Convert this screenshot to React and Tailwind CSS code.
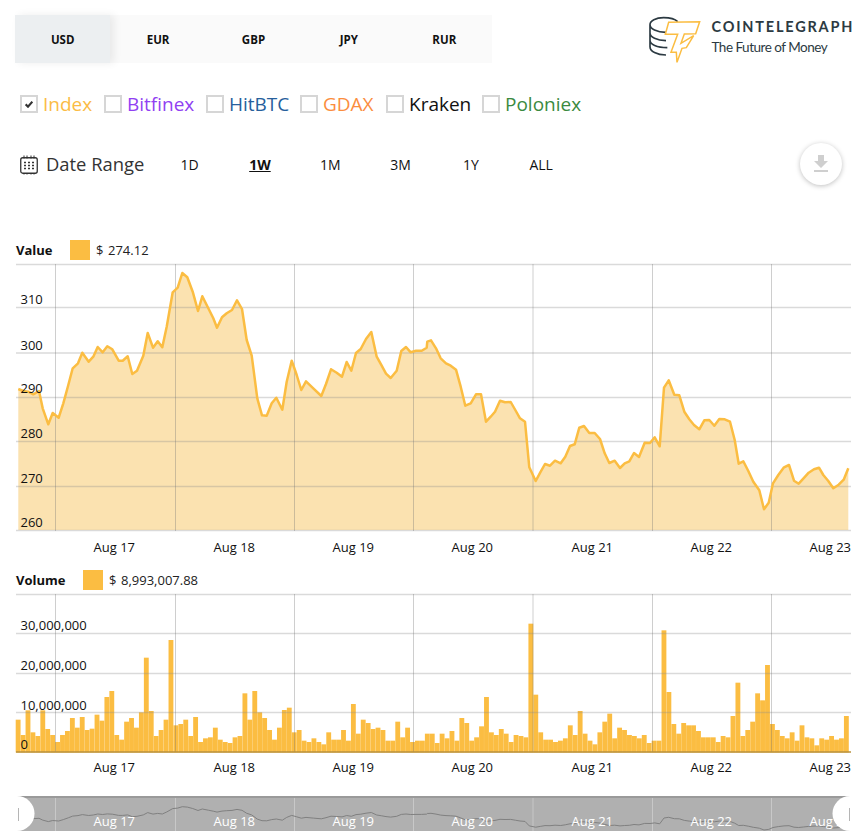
import React from "react";

const currencies = ["USD", "EUR", "GBP", "JPY", "RUR"];
const exchanges = [
  { name: "Index", color: "text-[#fbbc45]", width: "w-[84px]", checked: true },
  { name: "Bitfinex", color: "text-[#9040f2]", width: "w-[102px]" },
  { name: "HitBTC", color: "text-[#26609c]", width: "w-[94px]" },
  { name: "GDAX", color: "text-[#fb8d3e]", width: "w-[86px]" },
  { name: "Kraken", color: "text-[#111111]", width: "w-[96px]" },
  { name: "Poloniex", color: "text-[#3b8a40]", width: "w-[110px]" },
];
const ranges = ["1D", "1W", "1M", "3M", "1Y", "ALL"];

const dayLabels = [
  ["Aug 17", 93.5],
  ["Aug 18", 213.5],
  ["Aug 19", 332.5],
  ["Aug 20", 451.5],
  ["Aug 21", 571.5],
  ["Aug 22", 690.5],
  ["Aug 23", 809.5],
];
const dayLines = [55.5, 175.5, 294.5, 413.5, 533, 652.5, 771.5];

// traced at 3x from the reference, left half then right half
const leftLine = [
  [55, 462], [70, 468], [85, 470], [100, 478], [117, 468], [128, 520], [145, 568], [158, 534], [176, 548], [190, 505],
  [205, 450], [218, 400], [234, 385], [247, 353], [266, 380], [280, 365], [293, 336], [308, 352], [322, 334], [337, 343],
  [356, 377], [368, 377], [383, 364], [397, 417], [411, 407], [430, 362], [443, 294], [459, 338], [473, 319], [487, 337],
  [500, 275], [518, 172], [533, 158], [547, 114], [562, 127], [578, 170], [594, 228], [607, 184], [625, 220], [640, 250],
  [651, 278], [666, 247], [680, 235], [696, 225], [711, 196], [726, 222], [740, 315], [755, 362], [772, 490], [786, 541],
  [800, 542], [815, 505], [829, 488], [847, 524], [860, 440], [875, 377], [890, 420], [904, 465], [918, 439], [940, 460],
  [964, 483], [978, 447], [993, 403], [1010, 413], [1026, 425], [1040, 381], [1054, 407], [1068, 354], [1082, 342], [1098, 312],
  [1114, 291], [1130, 365], [1145, 392], [1158, 416], [1172, 429], [1190, 407], [1204, 348], [1218, 336], [1232, 352], [1248, 347],
  [1265, 347], [1280, 338],
];
const rightLine = [
  [-8, 320], [3, 316], [18, 340], [32, 370], [48, 385], [62, 392], [78, 404], [92, 455], [106, 512], [122, 505], [138, 478],
  [153, 478], [168, 560], [182, 545], [195, 530], [210, 497], [225, 502], [242, 501], [256, 525], [270, 550], [285, 560],
  [298, 697], [317, 738], [331, 712], [345, 687], [360, 692], [375, 677], [392, 685], [406, 665], [420, 633], [434, 628],
  [448, 578], [462, 573], [478, 594], [494, 594], [510, 612], [524, 655], [538, 684], [554, 677], [570, 699], [584, 685],
  [598, 679], [612, 654], [627, 666], [644, 623], [660, 624], [674, 607], [689, 634], [702, 458], [716, 436], [733, 479],
  [748, 481], [763, 530], [778, 553], [792, 570], [808, 583], [823, 556], [838, 555], [853, 572], [868, 552], [884, 553],
  [900, 560], [914, 615], [926, 686], [940, 679], [955, 708], [970, 740], [988, 766], [1002, 823], [1016, 803], [1029, 745],
  [1045, 720], [1062, 697], [1077, 690], [1092, 737], [1106, 746], [1120, 731], [1136, 713], [1152, 703], [1167, 698], [1180, 720],
  [1195, 738], [1210, 760], [1226, 749], [1241, 734], [1255, 700],
];
const linePoints = [
  ...leftLine.map(([x, y]) => [x / 3, 235 + y / 3]),
  ...rightLine.map(([x, y]) => [430 + x / 3, 235 + y / 3]),
];
const toPath = (points) => points.map(([x, y]) => `${x.toFixed(1)},${y.toFixed(1)}`).join(" ");
const navPoints = linePoints.map(([x, y]) => [x, 806.7 + (y - 273) * 0.0987]);

const barTops = [
  464, 510, 436, 502, 513, 436, 492, 510, 531, 510, 498, 459, 488, 456, 495, 491, 449, 467, 396, 378, 510, 524, 470, 459, 488, 442,
  278, 438, 513, 495, 464, 225, 481, 477, 464, 513, 456, 531, 520, 517, 488, 524, 531, 534, 517, 513, 385, 464, 378, 442, 459, 495,
  524, 488, 435, 428, 502, 495, 527, 531, 520, 531, 538, 502, 524, 524, 495, 527, 417, 506, 464, 474, 492, 488, 495, 527, 527, 470,
  517, 488, 531, 527, 527, 506,
  506, 534, 506, 520, 498, 527, 459, 474, 527, 517, 484, 396, 502, 510, 492, 506, 531, 510, 513, 517, 176, 389, 502, 524, 524, 531,
  527, 520, 481, 510, 438, 506, 527, 538, 502, 470, 446, 520, 488, 495, 510, 513, 520, 510, 534, 527, 527, 196, 381, 477, 506, 474,
  481, 481, 498, 517, 517, 517, 531, 513, 517, 453, 353, 513, 495, 470, 385, 406, 300, 477, 495, 513, 520, 502, 527, 481, 517, 520,
  541, 520, 524, 513, 524, 520, 453,
];

function Checkbox({ checked }) {
  return (
    <span className="flex h-[18px] w-[18px] shrink-0 items-center justify-center border-2 border-[#d6d6d6] bg-white">
      {checked && (
        <svg viewBox="0 0 12 12" className="h-2 w-2">
          <path d="M1 6.5 4.5 10 11 2.5" fill="none" stroke="#333" strokeWidth="3.2" />
        </svg>
      )}
    </span>
  );
}

function CalendarIcon() {
  return (
    <svg viewBox="0 0 18 20" className="h-5 w-[18px] shrink-0" fill="none" stroke="#333">
      <rect x="0.75" y="2.75" width="16.5" height="15.5" rx="2" strokeWidth="1.3" />
      <path d="M4 0.5v3M7 0.5v3M11 0.5v3M14 0.5v3M4 18v1.5M7 18v1.5M11 18v1.5M14 18v1.5" strokeWidth="1" />
      <path d="M4 7.5h2M8 7.5h2M12 7.5h2M4 10.5h2M8 10.5h2M12 10.5h2M4 13.5h2M8 13.5h2M12 13.5h2" strokeWidth="1.6" />
    </svg>
  );
}

function Logo() {
  return (
    <svg viewBox="20 30 170 150" className="h-[50px] w-[56.67px] shrink-0" fill="none">
      <path
        d="M112 50C104 42 88 38 70 38 46 38 29 47 29 59v66c0 14 20 25 48 25M29 59c0 12 20 23 48 23M29 84c0 12 20 23 48 23M29 106c0 12 20 22 52 22"
        stroke="#2c3a42"
        strokeWidth="5"
      />
      <path
        d="M85 52 178 50 166 86 132 87 122 115 160 92 138 128 125 130 110 172 108 142 92 142 112 88 75 88Z"
        fill="#fff"
        stroke="#fbbd42"
        strokeWidth="4.5"
      />
    </svg>
  );
}

function GridLines({ rows, top, bottom }) {
  return (
    <g>
      {rows.map((y) => (
        <line key={y} x1="16" x2="851" y1={y} y2={y} stroke="#8c8c8c" strokeOpacity="0.32" strokeWidth="1.3" />
      ))}
      {dayLines.map((x) => (
        <line key={x} x1={x} x2={x} y1={top} y2={bottom} stroke="#6e6e6e" strokeOpacity="0.34" strokeWidth="1" />
      ))}
    </g>
  );
}

function DayLabels({ y, className }) {
  return dayLabels.map(([label, x]) => (
    <text key={label} x={x} y={y} className={className}>
      {label}
    </text>
  ));
}

function ValueChart() {
  const area = `18.3,530 ${toPath(linePoints)} 848.3,530`;
  const labels = [
    ["310", 304],
    ["300", 349.5],
    ["290", 393],
    ["280", 437.5],
    ["270", 482.5],
    ["260", 526.5],
  ];
  return (
    <svg viewBox="0 260 860 300" className="block h-[300px] w-[860px]">
      <polygon points={area} fill="#fbe2b0" />
      <GridLines rows={[264.5, 307.5, 353, 397.5, 441.5, 486.5, 530.5]} top={264} bottom={531} />
      <polyline points={toPath(linePoints)} fill="none" stroke="#fbbd42" strokeWidth="2.5" strokeLinejoin="round" />
      {labels.map(([label, y]) => (
        <text key={label} x="20.5" y={y} className="fill-[#111] text-[13px]">
          {label}
        </text>
      ))}
      <DayLabels y={551.5} className="fill-[#111] text-[13px]" />
    </svg>
  );
}

function VolumeChart() {
  const labels = [
    ["30,000,000", 630],
    ["20,000,000", 670],
    ["10,000,000", 710],
    ["0", 749],
  ];
  return (
    <svg viewBox="0 590 860 200" className="block h-[200px] w-[860px]">
      {barTops.map((top, i) => {
        const y = 565 + top / 3;
        return <rect key={i} x={15.7 + i * 4.93} y={y} width="4.85" height={752.5 - y} fill="#fbbd42" />;
      })}
      <GridLines rows={[594.5, 633.5, 673.5, 712.5]} top={594} bottom={752} />
      <line x1="16" x2="851" y1="752" y2="752" stroke="#b8923f" strokeWidth="1.5" />
      {labels.map(([label, y]) => (
        <text key={label} x="20.5" y={y} className="fill-[#111] text-[13px]">
          {label}
        </text>
      ))}
      <DayLabels y={772} className="fill-[#111] text-[13px]" />
    </svg>
  );
}

function Navigator() {
  return (
    <svg viewBox="0 790 860 45" className="block h-[45px] w-[860px]">
      <defs>
        <clipPath id="nav-clip">
          <rect x="16" y="796" width="835" height="35" />
        </clipPath>
      </defs>
      <rect x="16" y="796" width="835" height="35" fill="#b0b0b0" />
      <rect x="16" y="796" width="835" height="2" fill="#9a9a9a" />
      {dayLines.map((x) => (
        <line key={x} x1={x} x2={x} y1="798" y2="831" stroke="#fff" strokeOpacity="0.3" />
      ))}
      <polyline points={toPath(navPoints)} fill="none" stroke="#808080" strokeWidth="1" />
      <DayLabels y={825.5} className="fill-white text-[13px]" />
      <g clipPath="url(#nav-clip)">
        <circle cx="17" cy="813.5" r="17.5" fill="#fff" />
        <circle cx="850" cy="813.5" r="17.5" fill="#fff" />
        <rect x="18" y="808" width="1" height="13" fill="#b5b5b5" />
        <rect x="849" y="808" width="1" height="13" fill="#b5b5b5" />
      </g>
    </svg>
  );
}

function Legend({ title, value, titleWidth }) {
  return (
    <div className="flex h-5 items-center pl-4 text-[13px] text-[#222]">
      <span className={`pt-px font-bold text-[#111] ${titleWidth}`}>{title}</span>
      <span className="h-5 w-5 bg-[#fbbd42]" />
      <span className="ml-[6px] w-3 pt-px">$</span>
      <span className="pt-px">{value}</span>
    </div>
  );
}

export default function App() {
  return (
    <div className="min-h-[839px] w-[860px] overflow-hidden bg-white pt-[15px] font-['Open_Sans',sans-serif]">
      <div className="flex h-12 items-start justify-between pl-[15px] pr-[6.5px]">
        <div className="grid h-12 w-[477px] grid-cols-5 bg-[#fafafa] text-[11.5px] font-bold text-[#111]">
          {currencies.map((c, i) => (
            <button
              key={c}
              className={
                i === 0
                  ? "bg-[#eceff1] pt-[2px] shadow-[4px_0_8px_rgba(0,0,0,0.07)]"
                  : "pt-[2px]"
              }
            >
              {c}
            </button>
          ))}
        </div>
        <div className="flex items-start gap-2">
          <Logo />
          <div className="w-[142px] font-['Lato',sans-serif] text-[#2c3a42]">
            <div className="mt-[2px] text-[14.5px] font-bold leading-5 tracking-[1.8px]">COINTELEGRAPH</div>
            <div className="text-[13.5px] leading-5 tracking-[-0.5px]">The Future of Money</div>
          </div>
        </div>
      </div>

      <div className="mt-[27px] flex h-7 items-center pl-5 text-[19px]">
        {exchanges.map((e) => (
          <label key={e.name} className={`flex items-center gap-[5px] ${e.width}`}>
            <Checkbox checked={e.checked} />
            <span className={e.color}>{e.name}</span>
          </label>
        ))}
      </div>

      <div className="mt-[25px] flex h-11 items-center pl-5 pr-[18px]">
        <CalendarIcon />
        <span className="ml-2 w-[100px] pb-[2px] text-[18.4px] text-[#333]">Date Range</span>
        <div className="ml-[8.5px] flex pb-[2px] text-[14px] text-[#111]">
          {ranges.map((r) => (
            <button key={r} className={`w-[70.3px] ${r === "1W" ? "font-bold underline" : ""}`}>
              {r}
            </button>
          ))}
        </div>
        <button className="ml-auto mb-[3px] flex h-[42px] w-[42px] items-center justify-center rounded-full bg-white shadow-[0_1px_5px_rgba(0,0,0,0.25)]">
          <svg viewBox="0 0 24 24" className="h-6 w-6 fill-[#cfcfcf]">
            <path d="M19 9h-4V3H9v6H5l7 7 7-7zM5 18v2h14v-2H5z" />
          </svg>
        </button>
      </div>

      <div className="mt-[53px]">
        <Legend title="Value" value="274.12" titleWidth="w-[54px]" />
      </div>
      <ValueChart />
      <div className="mt-[10px]">
        <Legend title="Volume" value="8,993,007.88" titleWidth="w-[67px]" />
      </div>
      <VolumeChart />
      <Navigator />
    </div>
  );
}
